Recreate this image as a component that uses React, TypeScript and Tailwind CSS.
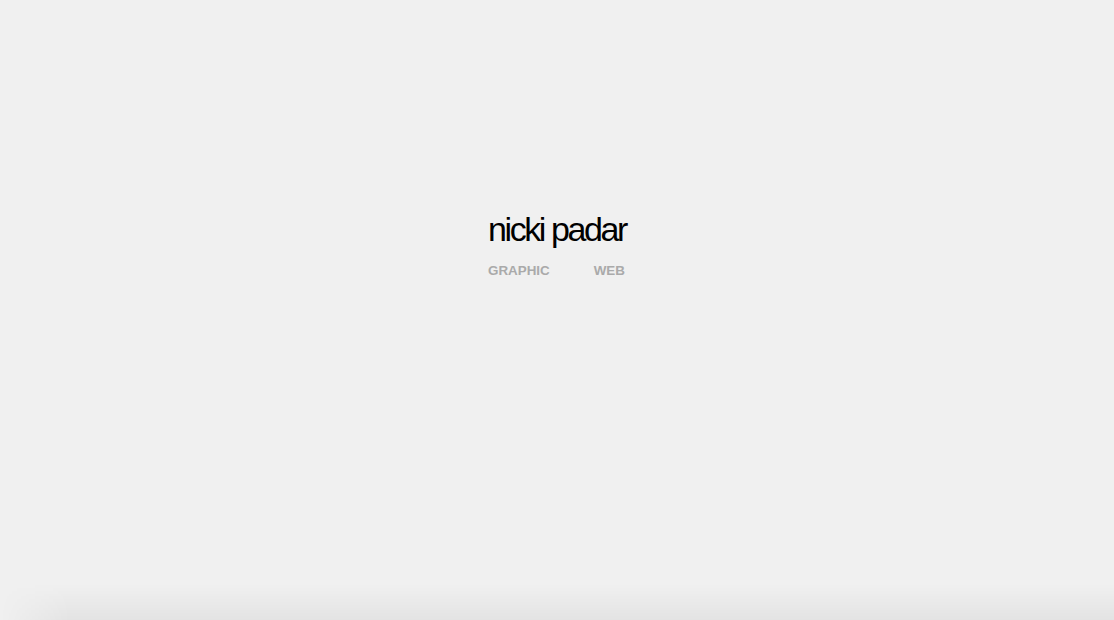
export default function App() {
  return (
    <div className="flex h-screen flex-col bg-[#f0f0f0] font-['Liberation_Sans',Arial,sans-serif]">
      <main className="flex flex-1 flex-col items-center pt-[212px]">
        <div className="flex flex-col">
          <h1 className="text-[34px] leading-[34px] tracking-[-2.4px] text-black">
            nicki padar
          </h1>
          <nav className="mt-[18px] flex gap-[44px] text-[13.4px] font-bold leading-[13px] text-[#aaaaaa]">
            <a href="#graphic">GRAPHIC</a>
            <a href="#web">WEB</a>
          </nav>
        </div>
      </main>
      <footer className="h-[36px] bg-[linear-gradient(to_bottom,rgba(0,0,0,0),rgba(0,0,0,0.05))] [mask-image:linear-gradient(to_right,transparent,black_70px)]" />
    </div>
  );
}
